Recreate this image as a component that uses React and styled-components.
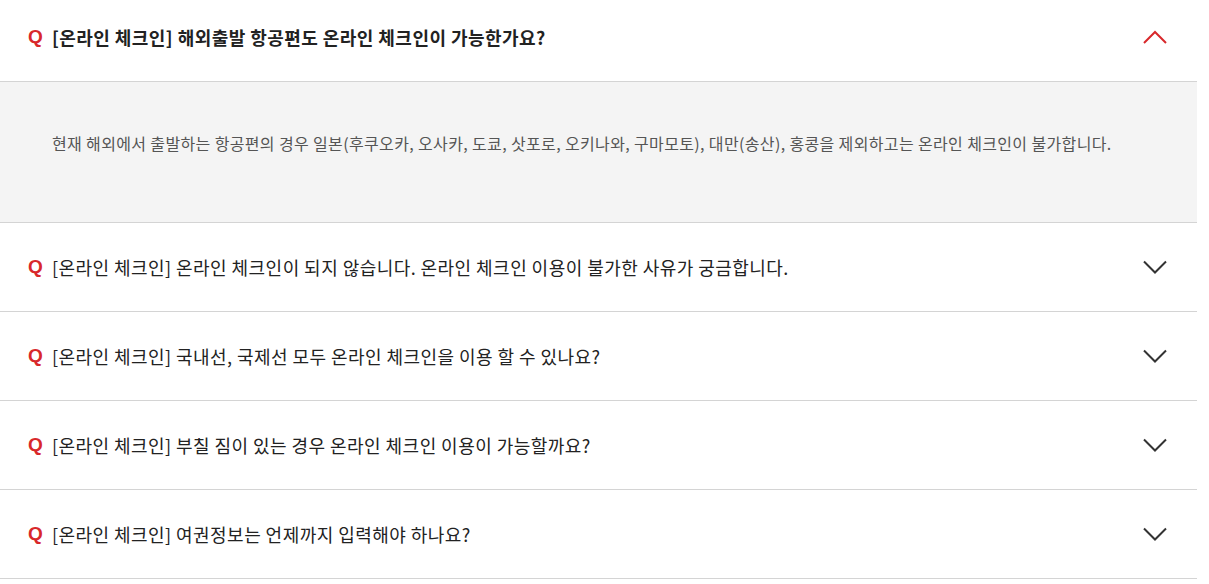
import React, { useState } from 'react';
import styled, { createGlobalStyle } from 'styled-components';

const GlobalStyle = createGlobalStyle`
	body {
		margin: 0;
		background: #fff;
		font-family: 'Noto Sans CJK KR', 'Noto Sans', 'Liberation Sans', sans-serif;
	}
`;

const List = styled.ul`
	list-style: none;
	margin: -7px 0 0 0;
	padding: 0;
	width: 1197px;
`;

const Item = styled.li`
	border-bottom: 1px solid #d4d4d4;
`;

const Question = styled.button`
	display: flex;
	align-items: center;
	box-sizing: border-box;
	width: 100%;
	height: ${(props) => (props.open ? '89px' : '88px')};
	padding: 0 29px 0 28px;
	border: 0;
	border-bottom: ${(props) => (props.open ? '1px solid #d4d4d4' : '0')};
	background: #fff;
	cursor: pointer;
	text-align: left;
	font-family: inherit;
`;

const Mark = styled.span`
	flex: none;
	width: 24px;
	color: #d8282b;
	font-family: 'Liberation Sans', Arial, sans-serif;
	font-weight: 700;
	font-size: 19px;
	line-height: 1;
	margin-top: -2px;
`;

const Title = styled.span`
	flex: 1;
	color: #222;
	font-size: 18px;
	letter-spacing: 0.45px;
	font-weight: ${(props) => (props.open ? 600 : 400)};
`;

const Answer = styled.div`
	background: #f4f4f4;
	padding: 49px 52px 67px;
	color: #555;
	font-size: 16px;
	line-height: 24px;
	letter-spacing: 0.36px;
`;

const Chevron = ({ open }) => (
	<svg width="26" height="14" viewBox="0 0 26 14" style={{ flex: 'none' }}>
		<path
			d={open ? 'M2 13 L13 2 L24 13' : 'M2 1.5 L13 12.5 L24 1.5'}
			fill="none"
			stroke={open ? '#d8282b' : '#333'}
			strokeWidth="2"
		/>
	</svg>
);

const faqs = [
	{
		q: '[온라인 체크인] 해외출발 항공편도 온라인 체크인이 가능한가요?',
		a: '현재 해외에서 출발하는 항공편의 경우 일본(후쿠오카, 오사카, 도쿄, 삿포로, 오키나와, 구마모토), 대만(송산), 홍콩을 제외하고는 온라인 체크인이 불가합니다.',
	},
	{
		q: '[온라인 체크인] 온라인 체크인이 되지 않습니다. 온라인 체크인 이용이 불가한 사유가 궁금합니다.',
		a: '',
	},
	{ q: '[온라인 체크인] 국내선, 국제선 모두 온라인 체크인을 이용 할 수 있나요?', a: '' },
	{ q: '[온라인 체크인] 부칠 짐이 있는 경우 온라인 체크인 이용이 가능할까요?', a: '' },
	{ q: '[온라인 체크인] 여권정보는 언제까지 입력해야 하나요?', a: '' },
];

export default function App() {
	const [openIndex, setOpenIndex] = useState(0);
	return (
		<>
			<GlobalStyle />
			<List>
				{faqs.map((faq, index) => {
					const open = index === openIndex;
					return (
						<Item key={faq.q}>
							<Question
								open={open}
								onClick={() => setOpenIndex(open ? -1 : index)}
							>
								<Mark>Q</Mark>
								<Title open={open}>{faq.q}</Title>
								<Chevron open={open} />
							</Question>
							{open && <Answer>{faq.a}</Answer>}
						</Item>
					);
				})}
			</List>
		</>
	);
}
